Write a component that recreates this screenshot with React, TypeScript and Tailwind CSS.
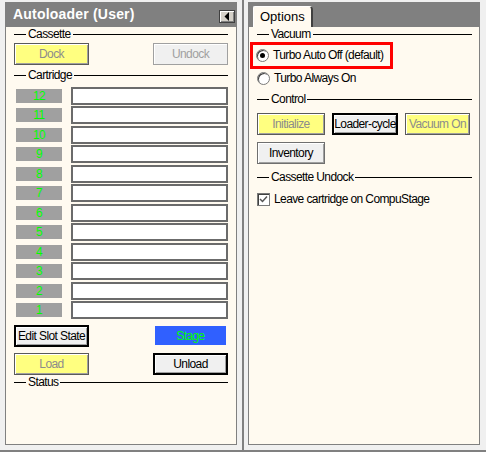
import React from "react";

const F = "font-['Liberation_Sans',Arial,sans-serif] text-[12px] tracking-[-0.6px]";

function GroupHeader({ label, className = "" }: { label: string; className?: string }) {
  return (
    <div className={`flex items-center h-[13px] ${className}`}>
      <div className="w-[12px] h-px bg-black" />
      <span className={`px-[2px] leading-[13px] text-black ${F}`}>{label}</span>
      <div className="flex-1 h-px bg-black" />
    </div>
  );
}

function SlotRow({ n, gapTop }: { n: number; gapTop: string }) {
  return (
    <div className={`flex items-center h-[18px] pl-[2px] ${gapTop}`}>
      <div
        className={`w-[46px] h-[14px] bg-[#a0a0a0] flex items-center justify-center leading-[13px] text-[#00ff00] ${F}`}
      >
        {n}
      </div>
      <div className="ml-[9px] w-[157px] h-[18px] bg-white border-2 border-[#6b6b6b]" />
    </div>
  );
}

function Radio({ checked }: { checked: boolean }) {
  return (
    <div className="w-[13px] h-[13px] rounded-full border border-[#7a7a7a] bg-white shadow-[inset_1px_1px_0_#404040] flex items-center justify-center">
      {checked && <div className="w-[5px] h-[5px] rounded-full bg-black" />}
    </div>
  );
}

const yellowBtn = `bg-[#ffff80] border border-[#5a5a5a] shadow-[inset_1px_1px_0_#ffffff,inset_-1px_-1px_0_#a0a0a0] flex items-center justify-center text-[#8c8c8c] ${F}`;
const defaultBtn = `bg-[#f0f0f0] border-2 border-black shadow-[inset_1px_1px_0_#ffffff,inset_-1px_-1px_0_#a0a0a0] flex items-center justify-center text-black ${F}`;

export default function App() {
  const slots = [12, 11, 10, 9, 8, 7, 6, 5, 4, 3, 2, 1];
  return (
    <div className="w-[486px] h-[452px] bg-[#f0f0f0] flex flex-col overflow-hidden">
      <div className="flex h-[450px]">
        {/* Left panel area */}
        <div className="w-[242px] h-full pl-[5px] pr-[5px] pt-[2px] pb-[5px] flex flex-col">
          <div className="h-[25px] bg-[#808080] flex items-center justify-between pl-[8px] pr-[2px]">
            <span className="text-white font-bold text-[14px] tracking-[0.2px] font-['Liberation_Sans',Arial,sans-serif]">
              Autoloader (User)
            </span>
            <div className="mt-[3px] w-[16px] h-[13px] bg-[#d4d0c8] border border-[#404040] shadow-[inset_1px_1px_0_#ffffff,inset_-1px_-1px_0_#808080] flex items-center justify-center">
              <svg width="6" height="9" viewBox="0 0 6 9">
                <polygon points="5,0 5,9 0.5,4.5" fill="#000" />
              </svg>
            </div>
          </div>
          <div className="flex-1 bg-[#fffaf0] border border-t-0 border-[#808080] pl-[8px] pr-[8px] pt-[1px] flex flex-col">
            <GroupHeader label="Cassette" />
            <div className="mt-[2px] flex justify-between">
              <div className={`w-[75px] h-[22px] ${yellowBtn}`}>Dock</div>
              <div
                className={`w-[75px] h-[22px] bg-[#f0f0f0] border border-[#a0a0a0] shadow-[inset_1px_1px_0_#ffffff] flex items-center justify-center text-[#a0a0a0] ${F}`}
              >
                Undock
              </div>
            </div>
            <GroupHeader label="Cartridge" className="mt-[4px]" />
            <div className="mt-[5px] flex flex-col">
              {slots.map((n, i) => (
                <SlotRow key={n} n={n} gapTop={i === 0 ? "" : i % 2 === 1 ? "mt-px" : "mt-[2px]"} />
              ))}
            </div>
            <div className="mt-[6px] flex justify-between items-start">
              <div className={`w-[75px] h-[22px] ${defaultBtn}`}>Edit Slot State</div>
              <div
                className={`mt-[1px] mr-[2px] w-[71px] h-[19px] bg-[#3060ff] flex items-center justify-center text-[#00ff00] ${F}`}
              >
                Stage
              </div>
            </div>
            <div className="mt-[6px] flex justify-between">
              <div className={`w-[75px] h-[22px] ${yellowBtn}`}>Load</div>
              <div className={`w-[75px] h-[22px] ${defaultBtn}`}>Unload</div>
            </div>
            <GroupHeader label="Status" className="mt-[1px]" />
          </div>
        </div>
        {/* Divider */}
        <div className="w-[2px] h-full bg-[#808080]" />
        {/* Right panel area */}
        <div className="w-[242px] h-full pl-[4px] pr-[6px] pt-[2px] pb-[5px] flex flex-col">
          <div className="h-[25px] bg-[#808080] flex items-end pl-[5px]">
            <div className="w-[60px] h-[21px] bg-[#fffaf0] border-l border-t border-white border-r-2 border-r-[#404040] rounded-tl-[2px] rounded-tr-[4px] pl-[6px] pt-[2px] text-[13px] leading-[15px] text-black font-['Liberation_Sans',Arial,sans-serif]">
              Options
            </div>
          </div>
          <div className="flex-1 bg-[#fffaf0] border border-t-0 border-[#808080] pl-[8px] pr-[7px] pt-[1px] flex flex-col">
            <GroupHeader label="Vacuum" />
            <div className="mt-[1px] ml-[-7px] w-[143px] h-[27px] border-[3px] border-[#ff0000] flex items-center pl-[3px]">
              <Radio checked />
              <span className={`ml-[4px] leading-[13px] text-black whitespace-nowrap ${F}`}>Turbo Auto Off (default)</span>
            </div>
            <div className="mt-[2px] h-[14px] flex items-center">
              <Radio checked={false} />
              <span className={`ml-[4px] leading-[13px] text-black whitespace-nowrap ${F}`}>Turbo Always On</span>
            </div>
            <GroupHeader label="Control" className="mt-[8px]" />
            <div className="mt-[7px] flex">
              <div className={`w-[68px] h-[22px] ${yellowBtn}`}>Initialize</div>
              <div className={`ml-[7px] w-[66px] h-[22px] whitespace-nowrap ${defaultBtn}`}>Loader-cycle</div>
              <div className={`ml-[7px] w-[65px] h-[22px] whitespace-nowrap ${yellowBtn}`}>Vacuum On</div>
            </div>
            <div
              className={`mt-[7px] w-[68px] h-[22px] bg-[#f0f0f0] border border-[#6f6f6f] shadow-[inset_1px_1px_0_#ffffff,inset_-1px_-1px_0_#a0a0a0] flex items-center justify-center text-black ${F}`}
            >
              Inventory
            </div>
            <GroupHeader label="Cassette Undock" className="mt-[7px]" />
            <div className="mt-[8px] h-[14px] flex items-center">
              <div className="w-[13px] h-[13px] bg-white border border-[#7a7a7a] shadow-[inset_1px_1px_0_#404040] flex items-center justify-center">
                <svg width="9" height="9" viewBox="0 0 9 9">
                  <polyline points="1,4 3.5,6.5 8,1.5" fill="none" stroke="#555" strokeWidth="1.5" />
                </svg>
              </div>
              <span className={`ml-[4px] leading-[13px] text-black whitespace-nowrap ${F}`}>Leave cartridge on CompuStage</span>
            </div>
          </div>
        </div>
      </div>
      <div className="h-[2px] bg-[#808080]" />
    </div>
  );
}
